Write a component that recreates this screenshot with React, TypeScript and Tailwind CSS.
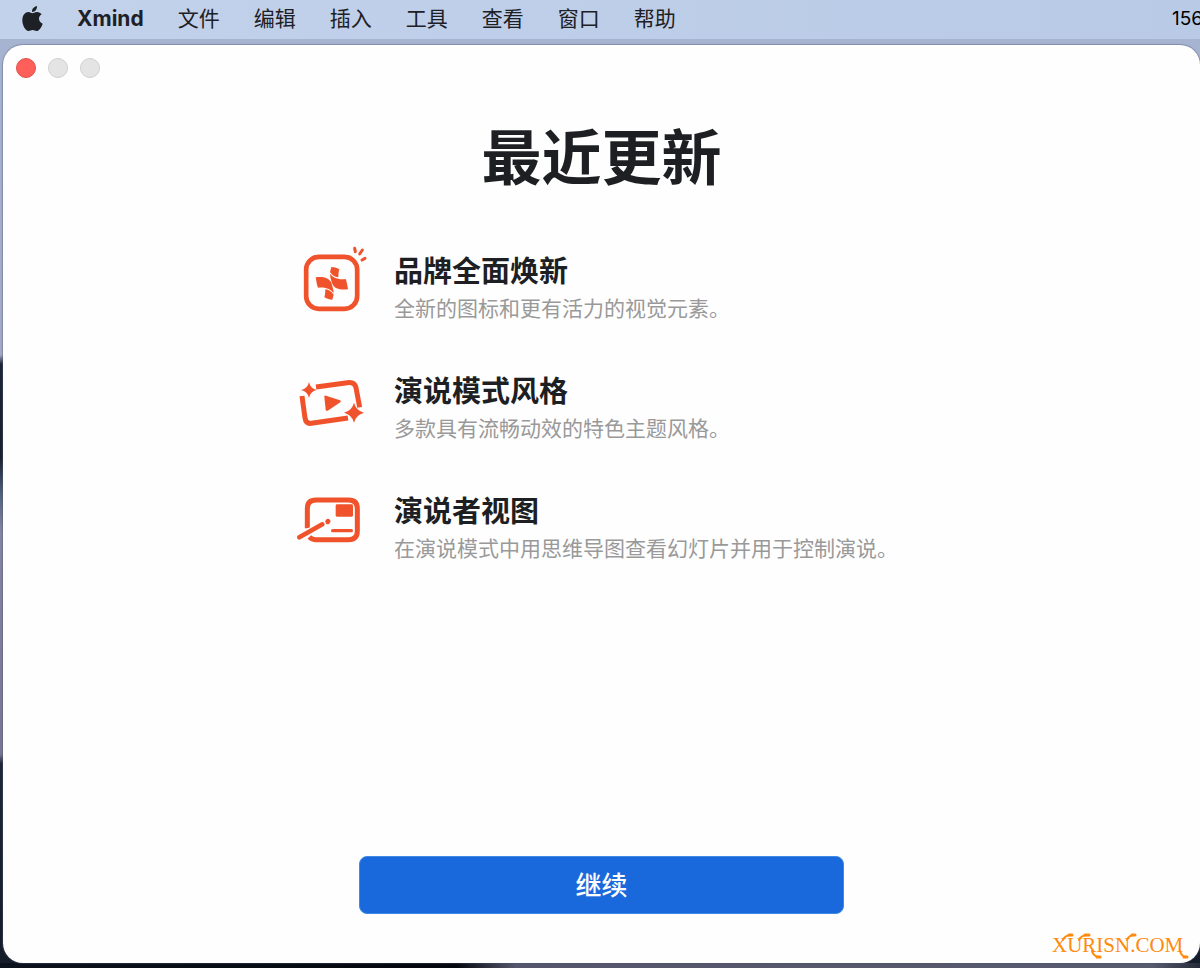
import React from 'react';

interface Feature {
  id: string;
  title: string;
  description: string;
  icon: React.ReactNode;
}

const MENUS = ['文件', '编辑', '插入', '工具', '查看', '窗口', '帮助'];

const AppleLogo = () => (
  <svg className="h-[25px] w-[21px]" viewBox="0 0 63 75" fill="currentColor" aria-hidden="true">
    <path d="M45 0C46 9 39 18 30 18C29 9 37 1 45 0Z" />
    <path d="M31 22C34 22 38 18 45 18C51 18 56 21 59 25C47 32 49 48 62 53C59 62 52 75 44 75C39 75 37 72 32 72C27 72 24 75 20 75C10 75 1 58 1 43C1 27 10 18 19 18C25 18 28 22 31 22Z" />
  </svg>
);

const BrandIcon = () => (
  <svg className="h-20 w-[72px] shrink-0" viewBox="18 18 216 240" fill="none" aria-hidden="true">
    <rect x="48.5" y="50.5" width="153" height="156" rx="38" stroke="#f0532b" strokeWidth="14" />
    <g stroke="#f0532b" strokeWidth="9" strokeLinecap="round">
      <path d="M194 25L196 35" />
      <path d="M217 30L209 42" />
      <path d="M225 55L216 60" />
    </g>
    <g fill="#f0532b">
      <path d="M77 112C100 109 118 114 124 128C127 139 131 148 131 159C122 148 108 140 84 143C80 134 79 122 77 112Z" />
      <path d="M106 148C117 149 125 155 131 164L127 179C119 179 111 177 103 172C105 165 106 156 106 148Z" />
      <g transform="rotate(180 125.5 130)">
        <path d="M77 112C100 109 118 114 124 128C127 139 131 148 131 159C122 148 108 140 84 143C80 134 79 122 77 112Z" />
        <path d="M106 148C117 149 125 155 131 164L127 179C119 179 111 177 103 172C105 165 106 156 106 148Z" />
      </g>
    </g>
  </svg>
);

const PresentationIcon = () => (
  <svg className="h-20 w-[72px] shrink-0" viewBox="18 -12 216 240" fill="none" aria-hidden="true">
    <g stroke="#f0532b" strokeWidth="15">
      <path d="M78 51L172 38Q194 35 198 53L209 112" />
      <path d="M36 78L45 144Q48 162 64 160L174 144" />
    </g>
    <g fill="#f0532b">
      <path d="M103 80Q103 75 108 77L150 91Q155 93 151 97L113 122Q108 124 107 119Z" />
      <path d="M57 36Q61 56 80 60Q61 64 57 84Q53 64 33 60Q53 56 57 36Z" />
      <path d="M192 98Q198 122 222 128Q198 134 192 158Q186 134 162 128Q186 122 192 98Z" />
    </g>
  </svg>
);

const PresenterIcon = () => (
  <svg className="h-20 w-[72px] shrink-0" viewBox="18 3 216 240" fill="none" aria-hidden="true">
    <path
      d="M52 130V71Q52 45 78 45H176Q202 45 202 71V138Q202 164 176 164H78Q66 164 58 156"
      stroke="#f0532b"
      strokeWidth="15"
    />
    <path d="M28 157L95 119" stroke="#fff" strokeWidth="22" />
    <path d="M28 157L97 118" stroke="#f0532b" strokeWidth="14" strokeLinecap="round" />
    <path d="M113 110L114 109" stroke="#f0532b" strokeWidth="15" strokeLinecap="round" />
    <path d="M102 107L109 121" stroke="#fff" strokeWidth="3" />
    <rect x="137" y="58" width="52" height="37" rx="4" fill="#f0532b" />
    <path d="M128 137H184" stroke="#f0532b" strokeWidth="10" strokeLinecap="round" />
  </svg>
);

const FEATURES: Feature[] = [
  {
    id: 'brand',
    title: '品牌全面焕新',
    description: '全新的图标和更有活力的视觉元素。',
    icon: <BrandIcon />,
  },
  {
    id: 'presentation',
    title: '演说模式风格',
    description: '多款具有流畅动效的特色主题风格。',
    icon: <PresentationIcon />,
  },
  {
    id: 'presenter',
    title: '演说者视图',
    description: '在演说模式中用思维导图查看幻灯片并用于控制演说。',
    icon: <PresenterIcon />,
  },
];

const MenuBar = () => (
  <header className="flex h-[39px] items-center bg-gradient-to-r from-[#c3d2eb] to-[#b8cae6] pb-[2px] pl-[22px] text-[#1d2024]">
    <nav className="flex items-center gap-[34px] text-[21px] leading-9">
      <button type="button" aria-label="Apple">
        <AppleLogo />
      </button>
      <button type="button" className="font-bold">
        Xmind
      </button>
      {MENUS.map((menu) => (
        <button key={menu} type="button">
          {menu}
        </button>
      ))}
    </nav>
    <span className="ml-auto w-7 overflow-hidden whitespace-nowrap pt-[2px] text-[19px] text-black">156</span>
  </header>
);

const Watermark = () => (
  <div className="absolute right-3 bottom-1 h-[28px] w-[136px] text-[#ff8a0d]">
    <span className="font-['Liberation_Serif',serif] text-[21px] leading-[28px]">XURISN.COM</span>
    <svg
      className="absolute inset-0 h-full w-full overflow-visible"
      viewBox="0 0 136 28"
      fill="none"
      stroke="currentColor"
      strokeLinecap="round"
      aria-hidden="true"
    >
      <path d="M11 9C12 6 15 4 20 4M27 9C28 6 31 4 37 4M75 9C76 6 79 4 83 4" strokeWidth="2" />
      <path d="M17 4H20M33 4H37M80 4H83" strokeWidth="3" />
      <path d="M40 20C41 24 43 26 48 26M128 20C129 24 131 26 135 26" strokeWidth="2" />
      <path d="M45 26H48M132 26H135" strokeWidth="3" />
    </svg>
  </div>
);

export default function App() {
  return (
    <div className="flex min-h-screen flex-col overflow-hidden font-[Inter,'Noto_Sans_CJK_SC',sans-serif]">
      <MenuBar />
      <div className="flex flex-1 flex-col bg-[linear-gradient(to_bottom,#a6b4d1_0%,#a3a9c4_34%,#1b2433_35%,#18202d_45%,#51617c_49%,#85869e_53%,#77778f_77%,#1c2634_78%,#141c29_100%)] pt-[6px] pl-[3px]">
        <main className="relative flex flex-1 flex-col rounded-[20px] bg-[#fefefe] pb-[49px] shadow-[0_0_1px_1px_rgba(80,85,120,0.4)]">
          <div className="flex gap-3 pt-[13px] pl-[13px]">
            <button type="button" aria-label="关闭" className="size-5 rounded-full border border-[#e2504c] bg-[#fe5f5a]" />
            <button type="button" aria-label="最小化" className="size-5 rounded-full border border-[#cfcfcf] bg-[#e4e4e4]" />
            <button type="button" aria-label="缩放" className="size-5 rounded-full border border-[#cfcfcf] bg-[#e4e4e4]" />
          </div>

          <h1 className="mt-11 text-center text-[60px] leading-[72px] font-bold text-[#1d1f22]">最近更新</h1>

          <ul className="mx-auto mt-[52px] flex w-[611px] flex-col gap-10">
            {FEATURES.map((feature) => (
              <li key={feature.id} className="flex gap-[26px]">
                {feature.icon}
                <div className="pt-[6px] whitespace-nowrap">
                  <h2 className="text-[29px] leading-10 font-bold text-[#1d1f22]">{feature.title}</h2>
                  <p className="text-[21px] leading-[34px] text-[#999999]">{feature.description}</p>
                </div>
              </li>
            ))}
          </ul>

          <button
            type="button"
            className="mx-auto mt-auto h-[58px] w-[485px] rounded-lg border border-[#3f8ae6] bg-[#1a69dc] text-[26px] font-medium text-white"
          >
            继续
          </button>

          <Watermark />
        </main>
        <div className="-ml-[3px] h-[5px] bg-[linear-gradient(to_right,#0c121b_0%,#03060c_38%,#55566b_43%,#585a6e_96%,#252a38_100%)]" />
      </div>
    </div>
  );
}
